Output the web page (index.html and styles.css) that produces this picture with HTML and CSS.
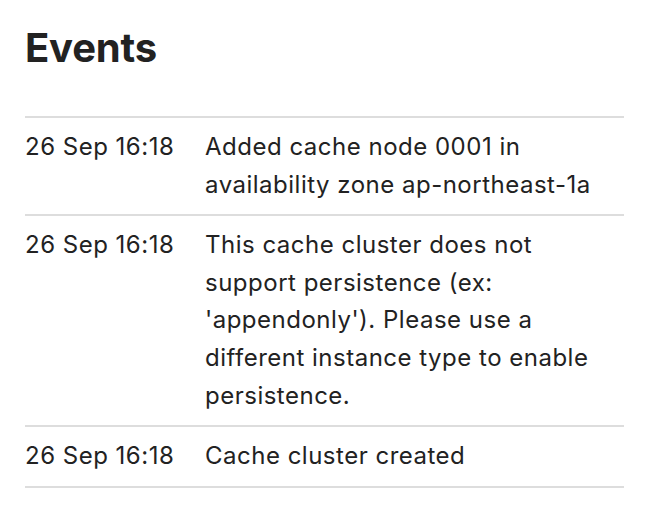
FILE: index.html
```html
<!DOCTYPE html>
<html>
<head>
<meta charset="utf-8">
<link rel="stylesheet" href="styles.css">
</head>
<body>
<div class="page">
  <h1 class="title">Events</h1>
  <div class="events">
    <div class="row">
      <div class="date">26 Sep 16:18</div>
      <div class="msg">Added cache node 0001 in availability zone ap-northeast-1a</div>
    </div>
    <div class="row">
      <div class="date">26 Sep 16:18</div>
      <div class="msg">This cache cluster does not support persistence (ex: 'appendonly'). Please use a different instance type to enable persistence.</div>
    </div>
    <div class="row">
      <div class="date">26 Sep 16:18</div>
      <div class="msg">Cache cluster created</div>
    </div>
  </div>
</div>
</body>
</html>
```

FILE: styles.css
```css
html, body {
  margin: 0;
  padding: 0;
  background: #ffffff;
}
.page {
  padding: 24px 28px 0 25px;
  font-family: Inter, "Noto Sans", sans-serif;
  color: #222222;
}
.title {
  margin: 0 0 44px 0;
  font-size: 40px;
  line-height: 48px;
  font-weight: 700;
  letter-spacing: -0.2px;
}
.events {
  border-top: 2px solid #dddddd;
}
.row {
  display: grid;
  grid-template-columns: 180px 400px;
  border-bottom: 2px solid #dddddd;
  padding: 10px 0 11px 0;
  font-size: 24px;
  line-height: 37.6px;
  letter-spacing: 0.5px;
}
.date {
  white-space: nowrap;
}
```
